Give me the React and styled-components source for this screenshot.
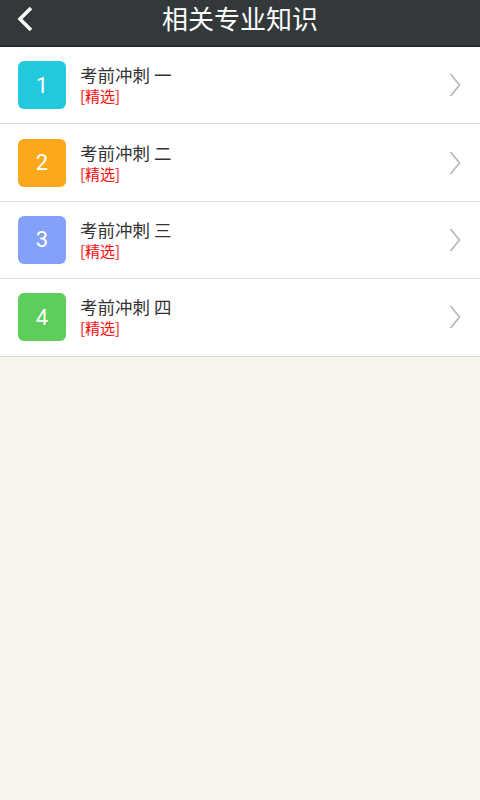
import React from "react";
import styled, { createGlobalStyle } from "styled-components";

const GlobalStyle = createGlobalStyle`
  html, body {
    margin: 0;
    padding: 0;
    background-color: #f7f4ed;
    font-family: "Roboto", "Noto Sans CJK SC", sans-serif;
  }
`;

const Page = styled.div`
  min-height: 800px;
  background-color: #f7f4ed;
`;

const Header = styled.div`
  height: 45px;
  background-color: #33383b;
  border-bottom: 2px solid #24282a;
  display: flex;
  align-items: center;
  justify-content: center;
  position: relative;
`;

const BackButton = styled.div`
  position: absolute;
  left: 14px;
  top: 5px;
  width: 22px;
  height: 28px;
  display: flex;
  align-items: center;
  justify-content: center;
`;

const Title = styled.h1`
  margin: 0;
  color: #ffffff;
  font-size: 26px;
  line-height: 30px;
  font-weight: 400;
  margin-top: -10px;
  font-family: "Noto Sans CJK SC", sans-serif;
`;

const List = styled.div`
  background-color: #ffffff;
`;

const Row = styled.div`
  height: 76.4px;
  display: flex;
  align-items: center;
  padding: 0 18px;
  border-bottom: 1px solid #dcdcdc;
`;

const Badge = styled.div`
  width: 48px;
  height: 48px;
  border-radius: 6px;
  background-color: ${(p) => p.color};
  color: #ffffff;
  font-size: 22px;
  display: flex;
  align-items: center;
  justify-content: center;
  flex-shrink: 0;
`;

const Texts = styled.div`
  flex: 1;
  margin-left: 14px;
  display: flex;
  flex-direction: column;
  gap: 1px;
  font-family: "Noto Sans CJK SC", sans-serif;
`;

const ItemTitle = styled.div`
  font-size: 17.5px;
  line-height: 20px;
  color: #333333;
`;

const Tag = styled.div`
  font-size: 15px;
  line-height: 19px;
  color: #ff0a0a;
`;

const Arrow = styled.div`
  width: 14px;
  display: flex;
  align-items: center;
  margin-right: -1px;
`;

const items = [
  { n: 1, title: "考前冲刺 一", color: "#22c9dc" },
  { n: 2, title: "考前冲刺 二", color: "#fba91a" },
  { n: 3, title: "考前冲刺 三", color: "#84a1f9" },
  { n: 4, title: "考前冲刺 四", color: "#5dcd5b" },
];

export default function App() {
  return (
    <Page>
      <GlobalStyle />
      <Header>
        <BackButton>
          <svg width="18" height="26" viewBox="0 0 18 26">
            <path
              d="M15 2 L4 13 L15 24"
              fill="none"
              stroke="#ffffff"
              strokeWidth="3.6"
            />
          </svg>
        </BackButton>
        <Title>相关专业知识</Title>
      </Header>
      <List>
        {items.map((it) => (
          <Row key={it.n}>
            <Badge color={it.color}>{it.n}</Badge>
            <Texts>
              <ItemTitle>{it.title}</ItemTitle>
              <Tag>[精选]</Tag>
            </Texts>
            <Arrow>
              <svg width="12" height="24" viewBox="0 0 12 24">
                <path
                  d="M1.5 1 L10.5 12 L1.5 23"
                  fill="none"
                  stroke="#b4b4b4"
                  strokeWidth="1.6"
                />
              </svg>
            </Arrow>
          </Row>
        ))}
      </List>
    </Page>
  );
}
